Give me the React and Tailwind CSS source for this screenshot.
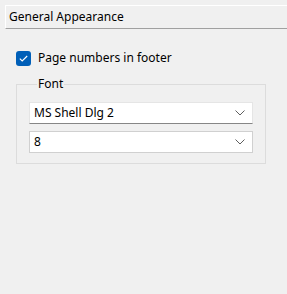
import React from 'react';

const font = { fontFamily: '"Noto Sans", "Open Sans", sans-serif' };

function Chevron() {
  return (
    <svg width="10" height="6" viewBox="0 0 10 6" className="shrink-0">
      <path d="M0.5 0.5 L5 5 L9.5 0.5" fill="none" stroke="#5f5f5f" strokeWidth="1" />
    </svg>
  );
}

function Combo({ value, active }) {
  return (
    <div
      className={`h-[22px] flex items-center justify-between pl-[4px] pr-[7px] bg-white border text-[12px] text-black ${
        active ? 'border-[#e5e5e5] border-b-[#868686]' : 'border-[#d0d0d0] bg-[#fdfdfd]'
      }`}
    >
      <span className="leading-none">{value}</span>
      <Chevron />
    </div>
  );
}

export default function App() {
  return (
    <div className="w-[287px] h-[294px] bg-[#f0f0f0] pt-[5px] pl-[5px] overflow-hidden" style={font}>
      <div className="h-[24px] flex items-center pl-[3px] border-t border-l border-white border-b border-b-[#a0a0a0] text-[12px] text-black">
        General Appearance
      </div>

      <label className="flex items-center mt-[20px] ml-[11px] gap-[7px] text-[12px] text-black">
        <span className="w-[15px] h-[15px] rounded-[3px] bg-[#005fb8] flex items-center justify-center">
          <svg width="9" height="7" viewBox="0 0 9 7">
            <path d="M0.8 3.6 L3.2 6 L8.2 1" fill="none" stroke="white" strokeWidth="1.1" />
          </svg>
        </span>
        Page numbers in footer
      </label>

      <fieldset className="ml-[11px] mt-[10px] w-[250px] border border-[#dcdcdc] px-[12px] pt-[11px] pb-[10px]">
        <legend className="ml-[8px] px-[1px] text-[12px] text-black leading-[14px]">Font</legend>
        <div className="flex flex-col gap-[7px]">
          <Combo value="MS Shell Dlg 2" active />
          <Combo value="8" />
        </div>
      </fieldset>
    </div>
  );
}
